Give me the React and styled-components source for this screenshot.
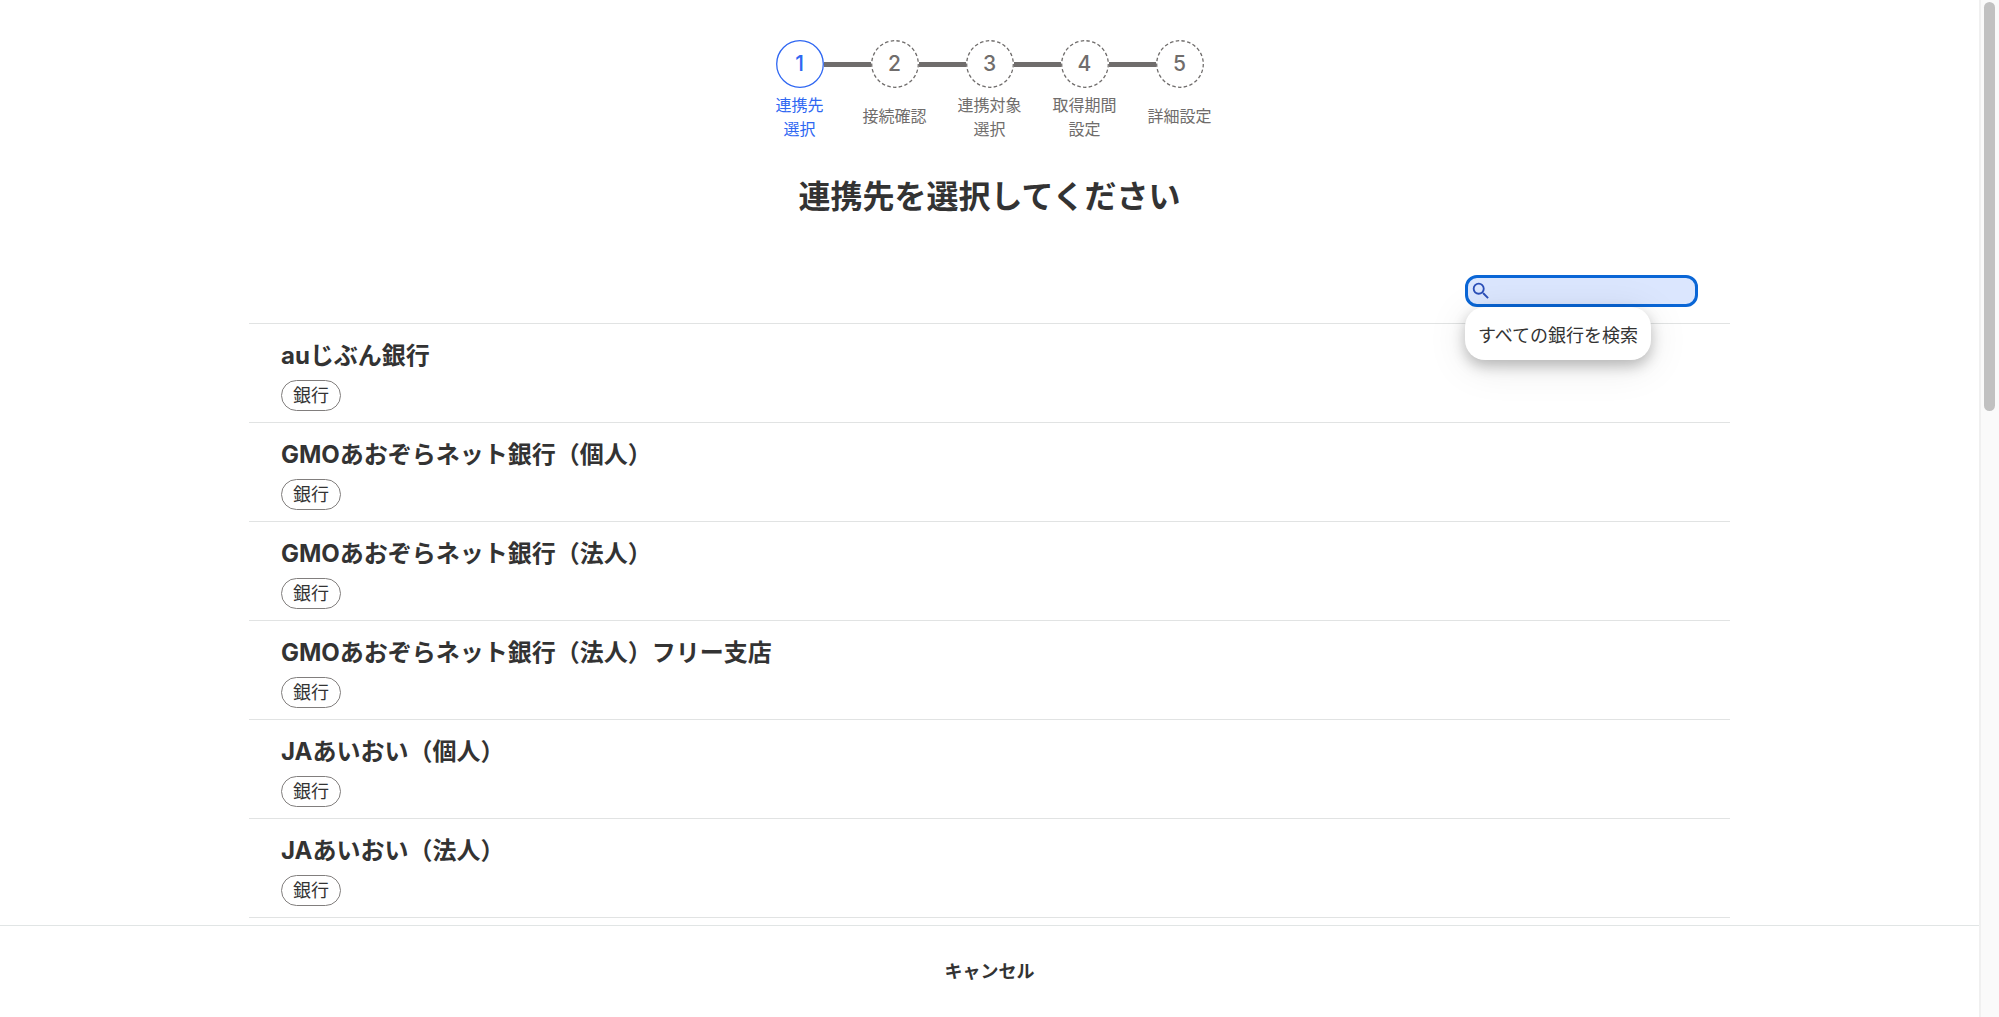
import React, { useState } from "react";
import styled, { createGlobalStyle } from "styled-components";
import { MdSearch } from "react-icons/md";

const GlobalStyle = createGlobalStyle`
  *, *::before, *::after { box-sizing: border-box; }
  body {
    margin: 0;
    background: #fff;
    color: #333;
    font-family: Inter, "Noto Sans CJK JP", sans-serif;
    font-size: 18px;
  }
  button, input { font: inherit; color: inherit; }
`;

const Page = styled.div`
  display: flex;
  height: 100vh;
  overflow: hidden;
`;

const Screen = styled.div`
  flex: 1;
  min-width: 0;
  display: flex;
  flex-direction: column;
`;

const Content = styled.main`
  flex: 1;
  min-height: 0;
  overflow: hidden;
  display: flex;
  flex-direction: column;
  align-items: center;
  padding: 40px 24px 0;
`;

const Steps = styled.ol`
  display: flex;
  list-style: none;
  margin: 0;
  padding: 0;
`;

const Step = styled.li`
  width: 95px;
  display: flex;
  flex-direction: column;
  align-items: center;
  gap: 5px;
  color: ${(p) => (p.$active ? "#2f67f2" : "#706d6c")};
`;

const StepTrack = styled.div`
  display: flex;
  align-items: center;
  align-self: stretch;
`;

const Connector = styled.span`
  flex: 1;
  height: 5px;
  background: ${(p) => (p.$hidden ? "transparent" : "#706d6c")};
`;

const StepCircle = styled.span`
  position: relative;
  display: flex;
  align-items: center;
  justify-content: center;
  width: 48px;
  height: 48px;
  font-size: 21px;
  line-height: 24px;
  font-weight: 500;
`;

const Ring = styled.svg`
  position: absolute;
  inset: 0;
  fill: none;
  stroke: currentColor;
`;

const StepLabel = styled.span`
  display: flex;
  flex-direction: column;
  align-items: center;
  justify-content: center;
  min-height: 46px;
  font-size: 16px;
  line-height: 24px;
`;

const Title = styled.h1`
  margin: 32px 0 54px;
  font-size: 32px;
  line-height: 48px;
  font-weight: 700;
`;

const Panel = styled.section`
  width: 100%;
  max-width: 1481px;
`;

const Toolbar = styled.div`
  display: flex;
  justify-content: flex-end;
  padding: 0 32px 16px;
`;

const SearchBox = styled.div`
  position: relative;
  width: 233px;
`;

const SearchField = styled.label`
  display: flex;
  align-items: center;
  height: 32px;
  padding: 0 2px;
  border: 3px solid #0a66d6;
  border-radius: 12px;
  background: #dbe6fe;
  color: #2b4fb8;
`;

const SearchInput = styled.input`
  flex: 1;
  min-width: 0;
  border: 0;
  outline: 0;
  padding: 0 4px;
  background: transparent;
  font-size: 16px;
  line-height: 24px;
`;

const Suggestion = styled.button`
  position: absolute;
  top: 100%;
  left: 0;
  z-index: 1;
  width: 186px;
  height: 53px;
  padding: 0;
  border: 0;
  border-radius: 20px;
  background: #fff;
  white-space: nowrap;
  box-shadow: 0 6px 14px rgba(0, 0, 0, 0.24), 0 6px 40px rgba(0, 0, 0, 0.1);
`;

const BankList = styled.ul`
  list-style: none;
  margin: 0;
  padding: 0;
  border-top: 1px solid #e1e3e3;
`;

const BankItem = styled.li`
  border-bottom: 1px solid #e1e3e3;
`;

const BankButton = styled.button`
  display: flex;
  flex-direction: column;
  align-items: flex-start;
  gap: 6px;
  width: 100%;
  padding: 14px 32px 11px;
  border: 0;
  background: transparent;
  text-align: left;
`;

const BankName = styled.span`
  font-size: 24px;
  line-height: 36px;
  font-weight: 700;
`;

const Tag = styled.span`
  padding: 0 11px;
  border: 1px solid #817e7d;
  border-radius: 16px;
  line-height: 29px;
`;

const Footer = styled.footer`
  display: flex;
  align-items: center;
  justify-content: center;
  height: 92px;
  padding-bottom: 3px;
  border-top: 1px solid #e1e5e5;
  background: #fff;
`;

const CancelButton = styled.button`
  padding: 8px 16px;
  border: 0;
  background: transparent;
  font-weight: 700;
`;

const ScrollTrack = styled.div`
  width: 20px;
  padding: 2px 4px 2px 3px;
  border-left: 2px solid #f0f0f0;
  background: #fafafa;
`;

const ScrollThumb = styled.div`
  width: 11px;
  height: 40.4%;
  border-radius: 6px;
  background: #c1c1c1;
`;

const steps = [
  ["連携先", "選択"],
  ["接続確認"],
  ["連携対象", "選択"],
  ["取得期間", "設定"],
  ["詳細設定"],
];

const banks = [
  "auじぶん銀行",
  "GMOあおぞらネット銀行（個人）",
  "GMOあおぞらネット銀行（法人）",
  "GMOあおぞらネット銀行（法人）フリー支店",
  "JAあいおい（個人）",
  "JAあいおい（法人）",
];

function StepRing({ dashed }) {
  return (
    <Ring viewBox="0 0 48 48" aria-hidden="true">
      <circle
        cx="24"
        cy="24"
        r="23.3"
        strokeWidth="1.3"
        pathLength="250"
        strokeDasharray={dashed ? "6 4" : undefined}
      />
    </Ring>
  );
}

export default function App() {
  const [query, setQuery] = useState("");

  return (
    <Page>
      <GlobalStyle />
      <Screen>
        <Content>
          <Steps>
            {steps.map((lines, i) => (
              <Step key={i} $active={i === 0} aria-current={i === 0 ? "step" : undefined}>
                <StepTrack>
                  <Connector $hidden={i === 0} />
                  <StepCircle>
                    <StepRing dashed={i !== 0} />
                    {i + 1}
                  </StepCircle>
                  <Connector $hidden={i === steps.length - 1} />
                </StepTrack>
                <StepLabel>
                  {lines.map((line) => (
                    <span key={line}>{line}</span>
                  ))}
                </StepLabel>
              </Step>
            ))}
          </Steps>
          <Title>連携先を選択してください</Title>
          <Panel>
            <Toolbar>
              <SearchBox>
                <SearchField htmlFor="bank-search">
                  <MdSearch size={22} aria-hidden="true" />
                  <SearchInput
                    id="bank-search"
                    type="text"
                    aria-label="すべての銀行を検索"
                    value={query}
                    onChange={(e) => setQuery(e.target.value)}
                  />
                </SearchField>
                <Suggestion type="button">すべての銀行を検索</Suggestion>
              </SearchBox>
            </Toolbar>
            <BankList>
              {banks.map((name) => (
                <BankItem key={name}>
                  <BankButton type="button">
                    <BankName>{name}</BankName>
                    <Tag>銀行</Tag>
                  </BankButton>
                </BankItem>
              ))}
            </BankList>
          </Panel>
        </Content>
        <Footer>
          <CancelButton type="button">キャンセル</CancelButton>
        </Footer>
      </Screen>
      <ScrollTrack aria-hidden="true">
        <ScrollThumb />
      </ScrollTrack>
    </Page>
  );
}
